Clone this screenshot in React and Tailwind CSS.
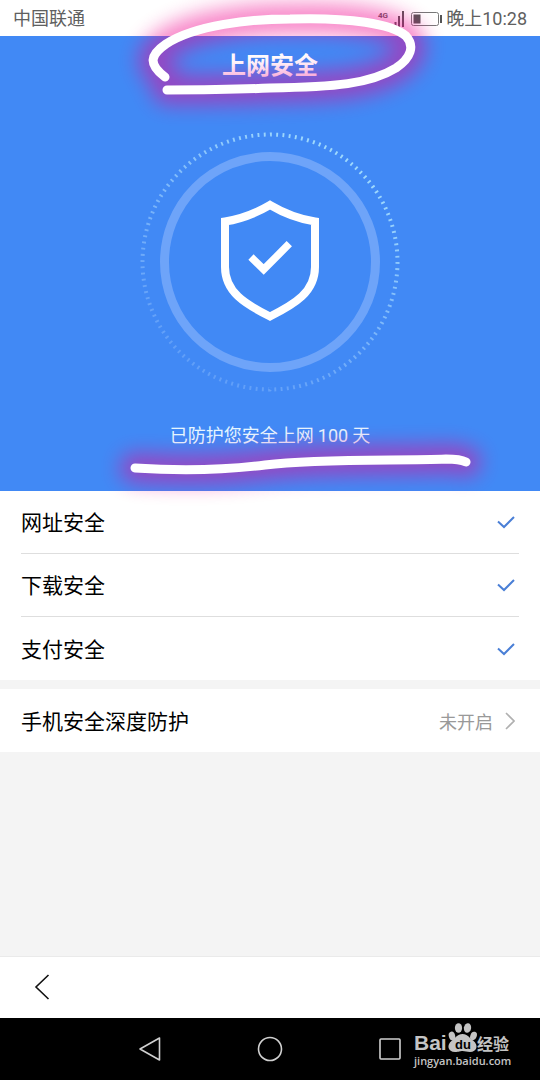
const checks = ["网址安全", "下载安全", "支付安全"];

function StatusBar() {
  return (
    <header className="flex h-9 items-center justify-between bg-white px-[13px] pt-0.5 font-['Roboto','Noto_Sans_CJK_SC',sans-serif] text-lg text-[#606060]">
      <span>中国联通</span>
      <div className="flex items-center gap-1">
        <svg width="66" height="18" viewBox="0 0 66 18" role="img" aria-label="4G 信号,电量 30%">
          <text x="2" y="8" fontSize="8" fontWeight="700" fill="#606060">4G</text>
          <path d="M16 17v-2M19.5 17v-5M23 17V6M27 17V1" stroke="#555" strokeWidth="2" fill="none" />
          <rect x="35.5" y="2.5" width="27" height="13" rx="2" fill="none" stroke="#777" />
          <rect x="37.5" y="4.5" width="7" height="9" fill="#555" />
          <rect x="64" y="5" width="2" height="8" fill="#555" />
        </svg>
        <span>晚上10:28</span>
      </div>
    </header>
  );
}

function ShieldDial() {
  return (
    <svg className="mx-auto block" width="260" height="260" viewBox="10 12 260 260" aria-hidden="true">
      <defs>
        <linearGradient id="ticks" x1="0.75" y1="0.1" x2="0.25" y2="0.9">
          <stop offset="0" stopColor="#b5ecff" stopOpacity="0.8" />
          <stop offset="1" stopColor="#9cc8ff" stopOpacity="0.35" />
        </linearGradient>
      </defs>
      <circle cx="140" cy="142" r="127.5" fill="none" stroke="url(#ticks)" strokeWidth="4" pathLength="256" strokeDasharray="0.6 1.4" />
      <circle cx="140" cy="142" r="105.5" fill="none" stroke="#6ea4f9" strokeWidth="9" />
      <path
        d="M140 85Q118 98 95 101.5V147C95 172 115 184 140 196.5C165 184 185 172 185 147V101.5Q162 98 140 85Z"
        fill="none"
        stroke="#fff"
        strokeWidth="8"
      />
      <path d="M121 137L133.7 149.5L159.3 123.7" fill="none" stroke="#fff" strokeWidth="7.5" />
    </svg>
  );
}

// Finger-drawn marks with a neon glow, laid over the top of the screen.
function Doodle() {
  const ring = "M165 77C148 64 150 55 166 44C195 25 250 19 290 19C350 17 392 24 406 36C415 46 411 58 396 68C370 84 335 87 270 88C230 90 200 90 167 90";
  const line = "M135 468C180 471 225 470 265 465C320 458 400 461 446 459Q460 459 466 462";
  return (
    <svg
      className="pointer-events-none absolute top-0 left-1/2 -translate-x-1/2"
      width="540"
      height="520"
      viewBox="0 0 540 520"
      fill="none"
      strokeLinecap="round"
      strokeLinejoin="round"
      aria-hidden="true"
    >
      <defs>
        <filter id="glow" x="0" y="-40" width="540" height="560" filterUnits="userSpaceOnUse" colorInterpolationFilters="sRGB">
          <feGaussianBlur stdDeviation="10" />
        </filter>
      </defs>
      <g stroke="#f0008c" strokeWidth="30" opacity="0.48" filter="url(#glow)">
        <path d={ring} />
        <path d={line} />
      </g>
      <g stroke="#fff" strokeWidth="9">
        <path d={ring} />
        <path d={line} />
      </g>
    </svg>
  );
}

function Tick() {
  return (
    <svg width="18" height="14" viewBox="0 0 18 14" fill="none" stroke="#4a7fd6" strokeWidth="2" role="img" aria-label="安全">
      <path d="M1 6.5L7 12L17 2" />
    </svg>
  );
}

function Watermark() {
  return (
    <div className="absolute top-1 right-[26px] w-[100px] text-[#c4c4c4]">
      <svg width="100" height="33" viewBox="0 0 100 33" className="block" fill="currentColor" role="img" aria-label="Baidu 经验">
        <text x="0" y="28" fontSize="21" fontWeight="700" fontFamily="Liberation Sans">Bai</text>
        <ellipse cx="38" cy="14" rx="3.2" ry="4.4" transform="rotate(-15 38 14)" />
        <ellipse cx="44.5" cy="6" rx="3.6" ry="4.8" />
        <ellipse cx="53.5" cy="6" rx="3.6" ry="4.8" transform="rotate(10 53.5 6)" />
        <ellipse cx="59.5" cy="14" rx="3.2" ry="4.4" transform="rotate(20 59.5 14)" />
        <path d="M48.500 12C43 12 42 16 38 18.500C32 23 34 30 41 30C45 30 46 29 48.500 29C51 29 53 30 56 30C63 30 65 23 59 18.500C55 16 54 12 48.500 12Z" />
        <text x="41" y="27" fontSize="13" fontWeight="700" fontFamily="Liberation Sans" fill="#000">du</text>
        <text x="63" y="28" fontSize="16" fontWeight="700" fontFamily="Noto Sans CJK SC">经验</text>
      </svg>
      <p className="font-['Open_Sans',sans-serif] text-[11px] leading-3 font-semibold">jingyan.baidu.com</p>
    </div>
  );
}

export default function App() {
  return (
    <div className="relative flex min-h-screen flex-col overflow-hidden bg-[#f4f4f4] font-['Noto_Sans_CJK_SC',sans-serif]">
      <StatusBar />

      <section className="flex h-[455px] flex-col bg-[#4189f5] text-center text-white">
        <h1 className="pt-2.5 text-2xl leading-9 font-bold">上网安全</h1>
        <div className="pt-[50px]">
          <ShieldDial />
        </div>
        <p className="pt-7 text-lg text-[#e6f6ff]">
          已防护您安全上网 <span className="font-['Roboto']">100</span> 天
        </p>
      </section>

      <ul className="bg-white px-[21px] text-[21px] text-black">
        {checks.map((label) => (
          <li key={label} className="flex h-[63px] items-center justify-between border-b border-[#dedede] pr-1 last:border-b-0">
            <span>{label}</span>
            <Tick />
          </li>
        ))}
      </ul>

      <button type="button" className="mt-[9px] flex h-[63px] items-center bg-white px-[21px] text-[21px] text-black">
        <span>手机安全深度防护</span>
        <span className="ml-auto text-lg text-[#999]">未开启</span>
        <svg className="mr-1 ml-3" width="10" height="18" viewBox="0 0 10 18" fill="none" stroke="#b0b0b0" strokeWidth="1.6">
          <path d="M1 1L9 9L1 17" />
        </svg>
      </button>

      <footer className="mt-auto">
        <div className="flex h-[62px] items-center border-t border-[#eaeaea] bg-white px-[34px] pb-0.5">
          <button type="button" aria-label="返回">
            <svg width="16" height="26" viewBox="0 0 16 26" fill="none" stroke="#111" strokeWidth="1.6">
              <path d="M14.5 1L2 13L14.5 25" />
            </svg>
          </button>
        </div>
        <nav className="relative flex h-[62px] items-center justify-center gap-[95px] bg-black">
          <button type="button" aria-label="后退">
            <svg width="24" height="26" viewBox="0 0 24 26" fill="none" stroke="#d0d0d0" strokeWidth="1.6" strokeLinejoin="round">
              <path d="M21.500 2V24L2 13Z" />
            </svg>
          </button>
          <button type="button" aria-label="主屏幕">
            <svg width="26" height="26" viewBox="0 0 26 26" fill="none" stroke="#d0d0d0" strokeWidth="1.6">
              <circle cx="13" cy="13" r="11.5" />
            </svg>
          </button>
          <button type="button" aria-label="最近任务">
            <svg width="24" height="26" viewBox="0 0 24 26" fill="none" stroke="#d0d0d0" strokeWidth="1.6">
              <rect x="2" y="3" width="20" height="20" rx="1" />
            </svg>
          </button>
          <Watermark />
        </nav>
      </footer>

      <Doodle />
    </div>
  );
}
